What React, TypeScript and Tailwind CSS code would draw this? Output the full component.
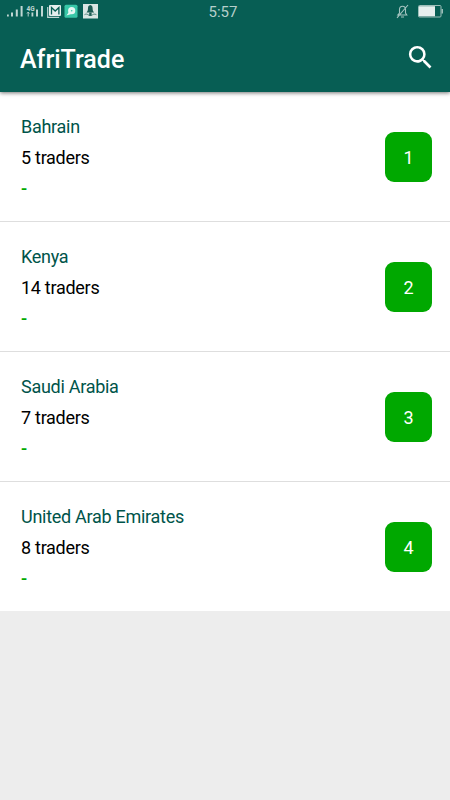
const countries = [
  { name: 'Bahrain', traders: 5 },
  { name: 'Kenya', traders: 14 },
  { name: 'Saudi Arabia', traders: 7 },
  { name: 'United Arab Emirates', traders: 8 },
];

const StatusBar = () => {
  return (
    <div className="grid grid-cols-3 h-6 text-[#b5cfcb]">
      {/* Signal and notification icons */}
      <svg className="w-[110px] h-6" viewBox="0 0 110 24" fill="none">
        <g fill="#c0d6d3">
          <rect x="7" y="14.5" width="1.8" height="2" />
          <rect x="11" y="12.5" width="2" height="4" />
          <rect x="15.8" y="9.5" width="2" height="7" />
          <rect x="20.6" y="6" width="2" height="10.5" />
          <rect x="31.5" y="12.5" width="1.8" height="4" />
          <rect x="36" y="9.5" width="2" height="7" />
          <rect x="41" y="6" width="2" height="10.5" />
        </g>
        <text x="26.5" y="10.5" fontSize="6.5" fontWeight="700" fill="#c0d6d3" fontFamily="Roboto, sans-serif">4G</text>
        <path d="M28.2 16.5v-4M27 13.5l1.2-1.5 1.2 1.5" stroke="#b5cfcb" strokeWidth="1" />
        <path d="M47.7 7v10.3h11.5" stroke="#c0d6d3" strokeWidth="1.2" />
        <rect x="49" y="5" width="12" height="11" rx="1" fill="#e6efee" />
        <path d="M51.5 14.5V7.5l3.7 3.5 3.7-3.5v7" stroke="#075e54" strokeWidth="1.3" />
        <rect x="64.5" y="4.7" width="13" height="13" rx="1.5" fill="#38c7a8" />
        <circle cx="71.7" cy="10.7" r="3.6" fill="#e6f8f4" />
        <path d="M69 12l-2.6 3.4 5-1.4" fill="#e6f8f4" />
        <circle cx="71.7" cy="10.7" r="0.8" fill="#38c7a8" />
        <rect x="83" y="4" width="15" height="14.5" fill="#d9e5e3" />
        <path d="M90.3 5c1.6.3 2.3 1.6 2.3 3.2 0 2 .4 3 1.5 4.3h-7.6c1.1-1.3 1.5-2.3 1.5-4.3 0-1.6.7-2.9 2.3-3.2z" fill="#1c5b53" />
        <path d="M84.5 14.7c1.5-1 2.7-.6 3.6.1 1.4 1 3 1 4.4 0 .9-.7 2.1-1.1 3.9-.1" stroke="#4d8079" strokeWidth="1" />
        <rect x="89.2" y="12.5" width="2.4" height="3.3" fill="#1c5b53" />
      </svg>

      <span className="text-center text-[15px] leading-6 -ml-1">5:57</span>

      {/* Muted bell and battery */}
      <svg className="w-[70px] h-6 justify-self-end" viewBox="0 0 70 24" fill="none">
        <path d="M17.8 15h9l-1.3-2V9.5c0-2-1.2-3.3-3-3.3s-3 1.3-3 3.3V13zM21 17h3M28 5L17 17.8" stroke="#a5c4c0" strokeWidth="1.1" />
        <rect x="38.5" y="5.5" width="22.5" height="11.5" rx="1" stroke="#9dbfba" />
        <rect x="39" y="6.2" width="16" height="10.1" fill="#e6efee" />
        <rect x="61.5" y="9" width="1.5" height="4.5" fill="#9dbfba" />
      </svg>
    </div>
  );
};

export default function App() {
  return (
    <div className="w-[450px] h-[800px] overflow-hidden bg-[#ededed] font-['Roboto',sans-serif]">
      <header className="relative h-[92px] bg-[#075e54] shadow-[0_1px_4px_rgba(0,0,0,0.55)]">
        <StatusBar />
        <div className="flex items-center justify-between h-[68px] pt-1 pl-5 pr-3.5">
          <h1 className="text-[25px] leading-[30px] font-medium text-white">AfriTrade</h1>
          <button aria-label="Search" className="-mt-[5px]">
            <svg className="w-[31px] h-[31px]" viewBox="0 0 24 24" fill="#ffffff">
              <path d="M15.5 14h-.79l-.28-.27A6.471 6.471 0 0 0 16 9.5 6.5 6.5 0 1 0 9.5 16c1.61 0 3.09-.59 4.23-1.57l.27.28v.79l5 4.99L20.49 19l-4.99-5zm-6 0C7.01 14 5 11.99 5 9.5S7.01 5 9.5 5 14 7.01 14 9.5 11.99 14 9.5 14z" />
            </svg>
          </button>
        </div>
      </header>

      <ul>
        {countries.map((country, index) => (
          <li
            key={country.name}
            className="flex items-center justify-between h-[130px] pl-[21px] pr-[18px] bg-white border-b border-[#dedede] last:h-[129px] last:border-b-0"
          >
            <div className="pt-0.5 text-[18px] leading-[31px] tracking-[-0.28px]">
              <p className="text-[#00544a]">{country.name}</p>
              <p className="text-black">{country.traders} traders</p>
              <p className="font-medium text-[#00a800]">-</p>
            </div>
            <span className="flex items-center justify-center w-[47px] h-[50px] pt-0.5 rounded-[9px] bg-[#00a800] text-[18px] text-white">
              {index + 1}
            </span>
          </li>
        ))}
      </ul>
    </div>
  );
}
